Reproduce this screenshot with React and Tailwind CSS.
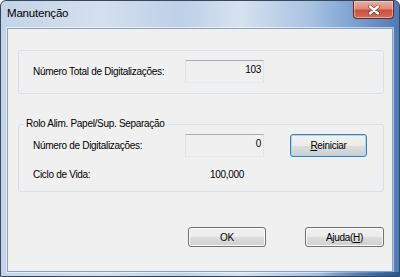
const btn =
  "flex items-center justify-center rounded-[3px] border border-[#707070] bg-[linear-gradient(to_bottom,#f2f2f2_0%,#ebebeb_50%,#dddddd_51%,#cfcfcf_100%)] shadow-[inset_0_0_0_1px_#fcfcfc] text-[10px] text-black";

const field =
  "h-[23px] w-[79px] border border-t-[#abadb3] border-x-[#e2e3ea] border-b-[#e3e9ef] bg-[#f0f0f0] text-right pr-[2px] pt-[3px] text-[10px] leading-[12px]";

export default function App() {
  return (
    <div className="w-[400px] h-[277px] flex flex-col overflow-hidden rounded-t-[6px] border border-[#34495f] bg-[linear-gradient(to_right,#c3d3e7_0%,#d4e0ee_25%,#bdd0e7_45%,#d6e2ef_60%,#a7c2e2_78%,#6f97cb_92%,#4d79b4_100%)] font-['Liberation_Sans',Arial,sans-serif] text-black">
      <div className="h-[27px] flex items-start justify-between">
        <div className="pl-[6px] pt-[5px] text-[11.5px] leading-[14px] tracking-[-0.2px]">Manutenção</div>
        <div className="mr-[5px] w-[41px] h-[18px] rounded-b-[4px] border border-t-0 border-[#6b2a22] bg-[linear-gradient(to_bottom,#eab0a4_0%,#dc8a7a_45%,#c9503d_55%,#d5705a_100%)] shadow-[inset_0_0_0_1px_rgba(255,220,210,0.5)] flex items-center justify-center">
          <svg width="12" height="10" viewBox="0 0 12 10">
            <path d="M2 1.5 L10 8.5 M10 1.5 L2 8.5" stroke="#5a1e16" strokeWidth="4" strokeLinecap="round" opacity="0.6" />
            <path d="M2 1.5 L10 8.5 M10 1.5 L2 8.5" stroke="#ffffff" strokeWidth="2.4" strokeLinecap="round" />
          </svg>
        </div>
      </div>

      <div className="mx-[6px] h-[244px] border border-[#8ea2bb] bg-[#f0f0f0] shadow-[0_0_0_1px_rgba(255,255,255,0.55)] flex flex-col text-[10px] tracking-[-0.3px]">
        <div className="ml-[10px] mt-[21px] w-[366px] h-[44px] rounded-[3px] border border-[#d5dfe5] flex items-start pt-[9px] pl-[14px]">
          <div className="w-[152px] pt-[6px] leading-[12px]">Número Total de Digitalizações:</div>
          <div className={field}>103</div>
        </div>

        <div className="relative ml-[10px] mt-[30px] w-[366px] h-[68px] rounded-[3px] border border-[#d5dfe5] pt-[9px] pl-[14px]">
          <span className="absolute left-[5px] -top-[7px] bg-[#f0f0f0] px-[2px] leading-[12px]">Rolo Alim. Papel/Sup. Separação</span>
          <div className="flex items-start">
            <div className="w-[152px] pt-[6px] leading-[12px]">Número de Digitalizações:</div>
            <div className={field}>0</div>
            <div className="ml-[26px] w-[77px] h-[23px] flex items-center justify-center rounded-[3px] border border-[#3c7fb1] bg-[linear-gradient(to_bottom,#f2f2f2_0%,#ebebeb_50%,#dddddd_51%,#cfcfcf_100%)] shadow-[inset_0_0_0_1px_#9fdcf7]">
              <span><span className="underline">R</span>einiciar</span>
            </div>
          </div>
          <div className="flex mt-[12px] leading-[12px]">
            <div className="w-[177px]">Ciclo de Vida:</div>
            <div>100,000</div>
          </div>
        </div>

        <div className="flex mt-[35px] ml-[180px]">
          <div className={btn + " w-[78px] h-[20px]"}>OK</div>
          <div className={btn + " ml-[39px] w-[79px] h-[20px]"}>
            <span>Ajuda(<span className="underline">H</span>)</span>
          </div>
        </div>
      </div>
      <div className="flex-1 bg-[linear-gradient(to_right,transparent_0%,transparent_80%,#2c5a95_100%)]" />
    </div>
  );
}
